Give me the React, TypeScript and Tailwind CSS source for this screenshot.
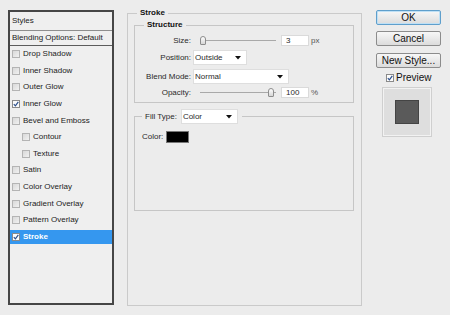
import React from "react";

type StyleItem = { label: string; checked?: boolean; indent?: boolean; selected?: boolean };

const styleItems: StyleItem[] = [
  { label: "Drop Shadow" },
  { label: "Inner Shadow" },
  { label: "Outer Glow" },
  { label: "Inner Glow", checked: true },
  { label: "Bevel and Emboss" },
  { label: "Contour", indent: true },
  { label: "Texture", indent: true },
  { label: "Satin" },
  { label: "Color Overlay" },
  { label: "Gradient Overlay" },
  { label: "Pattern Overlay" },
  { label: "Stroke", checked: true, selected: true },
];

const Check = ({ checked }: { checked?: boolean }) => (
  <span
    className={
      checked
        ? "flex h-[8px] w-[8px] shrink-0 items-center justify-center border border-[#8a8a8a] bg-[#fbfbfb]"
        : "h-[8px] w-[8px] shrink-0 border border-[#b4b4b4] bg-gradient-to-br from-[#d9d9d9] to-[#f1f1f1]"
    }
  >
    {checked && (
      <svg width="6" height="6" viewBox="0 0 6 6">
        <path d="M0.8 3.1 L2.4 4.8 L5.3 0.8" fill="none" stroke="#2b4f8c" strokeWidth="1.2" />
      </svg>
    )}
  </span>
);

const ListRow = ({ item }: { item: StyleItem }) => (
  <div className="flex h-[16.6px] items-center">
    <div
      className={`flex h-[14px] w-full items-center ${item.indent ? "pl-[12px]" : "pl-[2px]"} ${
        item.selected ? "bg-[#3597ef] font-bold text-white" : ""
      }`}
    >
      <Check checked={item.checked} />
      <span className="ml-[3px] whitespace-nowrap">{item.label}</span>
    </div>
  </div>
);

const Arrow = () => (
  <svg width="6" height="4" viewBox="0 0 6 4" className="shrink-0">
    <path d="M0 0 H6 L3 3.5 Z" fill="#111" />
  </svg>
);

const Dropdown = ({ value, width }: { value: string; width: string }) => (
  <div
    className={`flex h-[15px] ${width} items-center justify-between border border-[#dedede] bg-white pl-[1px] pr-[5px]`}
  >
    <span>{value}</span>
    <Arrow />
  </div>
);

const Slider = ({ atEnd }: { atEnd?: boolean }) => (
  <div className="relative ml-[6px] flex h-[11px] w-[76px] items-center">
    <div className="h-px w-full bg-[#a9a9a9]" />
    <div
      className={`absolute top-[1px] h-[9px] w-[6px] rounded-t-[3px] rounded-b-[1px] border border-[#8d8d8d] bg-gradient-to-b from-white to-[#d6d6d6] ${
        atEnd ? "right-[2px]" : "left-0"
      }`}
    />
  </div>
);

const NumInput = ({ value }: { value: string }) => (
  <div className="ml-[5px] flex h-[11px] w-[28px] items-center border border-[#dadada] bg-white pl-[4px]">
    {value}
  </div>
);

const Label = ({ children }: { children: React.ReactNode }) => (
  <span className="w-[56px] shrink-0 whitespace-nowrap text-right">{children}</span>
);

const DialogButton = ({ children, primary }: { children: React.ReactNode; primary?: boolean }) => (
  <div
    className={`flex h-[15px] w-[65px] items-center justify-center rounded-[2px] border bg-gradient-to-b from-[#f7f7f7] to-[#dcdcdc] text-[10px] text-[#111] ${
      primary ? "border-[#5f9fcc] shadow-[inset_0_0_0_1px_#bfe0f5]" : "border-[#8c8c8c]"
    }`}
  >
    {children}
  </div>
);

export default function App() {
  return (
    <div className="flex h-[315px] w-[450px] items-start overflow-hidden bg-[#ececec] font-['Liberation_Sans',Arial,sans-serif] text-[8px] leading-[10px] text-[#2a2a2a]">
      {/* styles list */}
      <div className="ml-[8px] mt-[10px] flex h-[295px] w-[106px] shrink-0 flex-col border-2 border-[#464646] bg-[#efefef] text-[#222]">
        <div className="flex h-[19px] items-center border-b border-[#8e8e8e] pl-[2px]">Styles</div>
        <div className="flex h-[15px] items-center border-b border-[#5c5c5c] pl-[2px]">Blending Options: Default</div>
        {styleItems.map((item) => (
          <ListRow key={item.label} item={item} />
        ))}
      </div>

      {/* stroke settings */}
      <fieldset className="ml-[13px] mt-[8px] h-[298px] w-[235px] shrink-0 border border-[#cacaca]">
        <legend className="ml-[9px] px-[3px] font-bold text-[#111]">Stroke</legend>

        <fieldset className="ml-[6px] mr-[7px] mt-[2px] border border-[#c6c6c6] pb-[2px]">
          <legend className="ml-[9px] px-[3px] font-bold text-[#111]">Structure</legend>

          <div className="mt-[3px] flex h-[15px] items-center">
            <Label>Size:</Label>
            <span className="w-[3px]" />
            <Slider />
            <NumInput value="3" />
            <span className="ml-[2px] text-[#555]">px</span>
          </div>
          <div className="mt-[2px] flex h-[15px] items-center">
            <Label>Position:</Label>
            <span className="w-[2px]" />
            <Dropdown value="Outside" width="w-[54px]" />
          </div>
          <div className="mt-[4px] flex h-[15px] items-center">
            <Label>Blend Mode:</Label>
            <span className="w-[2px]" />
            <Dropdown value="Normal" width="w-[96px]" />
          </div>
          <div className="mt-[1px] flex h-[15px] items-center">
            <Label>Opacity:</Label>
            <span className="w-[3px]" />
            <Slider atEnd />
            <NumInput value="100" />
            <span className="ml-[2px] text-[#555]">%</span>
          </div>
        </fieldset>

        <fieldset className="ml-[6px] mr-[7px] mt-[6px] h-[102px] border border-[#c6c6c6]">
          <legend className="ml-[7px] flex items-center pl-[3px] pr-[4px]">
            <span>Fill Type:</span>
            <span className="ml-[4px]">
              <Dropdown value="Color" width="w-[57px]" />
            </span>
          </legend>
          <div className="mt-[7px] flex h-[12px] items-center pl-[7px]">
            <span>Color:</span>
            <span className="ml-[3px] h-[12px] w-[23px] border border-[#777] bg-black" />
          </div>
        </fieldset>
      </fieldset>

      {/* buttons + preview */}
      <div className="ml-[14px] mt-[10px] flex w-[66px] shrink-0 flex-col">
        <DialogButton primary>OK</DialogButton>
        <div className="mt-[6px]">
          <DialogButton>Cancel</DialogButton>
        </div>
        <div className="mt-[7px]">
          <DialogButton>New Style...</DialogButton>
        </div>
        <div className="ml-[10px] mt-[5px] flex h-[10px] items-center text-[10px] text-[#111]">
          <Check checked />
          <span className="ml-[2px]">Preview</span>
        </div>
        <div className="ml-[6px] mt-[4px] flex h-[50px] w-[50px] items-center justify-center border border-[#cfcfcf] bg-[#dedede] shadow-[inset_0_0_0_1px_#f2f2f2]">
          <div className="h-[24px] w-[24px] border border-[#444] bg-[#5a5a5a]" />
        </div>
      </div>
    </div>
  );
}
